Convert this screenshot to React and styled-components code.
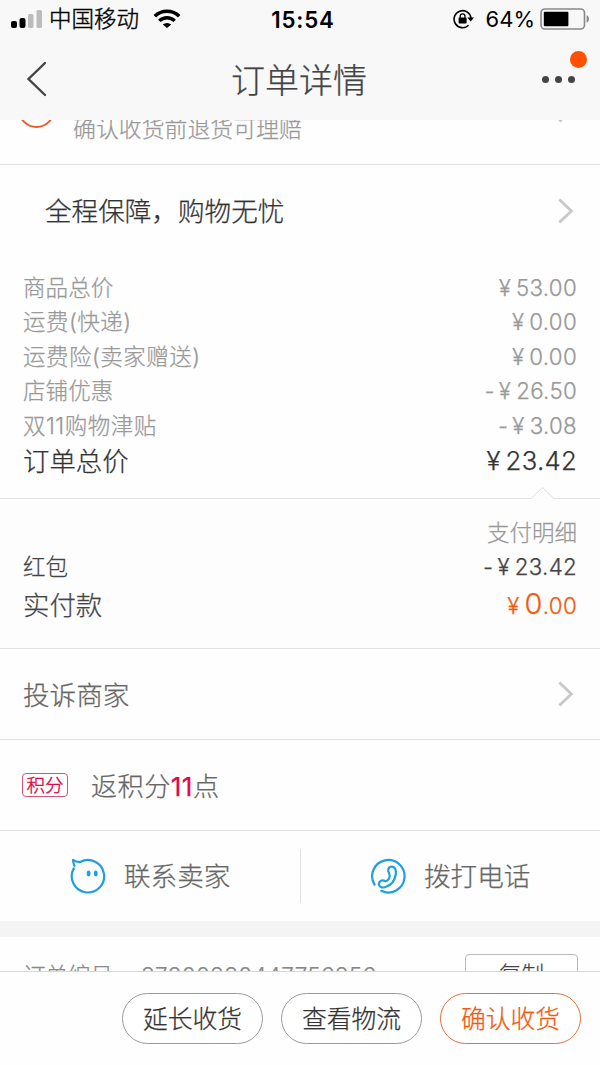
import React from "react";
import styled, { createGlobalStyle, css } from "styled-components";

const GlobalStyle = createGlobalStyle`
    * {
        box-sizing: border-box;
    }

    body {
        margin: 0;
        background: white;
        font-family: Inter, "Noto Sans CJK SC", sans-serif;
        font-weight: 300;
        -webkit-text-stroke: 0.25px;
        color: #333;
    }
`;

const Screen = styled.div`
    display: flex;
    flex-direction: column;
    width: 600px;
    height: 1065px;
    background: #fefefe;
    overflow: hidden;
    white-space: nowrap;
`;

const Header = styled.header`
    flex: none;
    height: 120px;
    background: #f8f8f8;
`;

const StatusBar = styled.div`
    display: grid;
    grid-template-columns: 1fr auto 1fr;
    align-items: center;
    height: 38px;
    padding: 0 11px;
    color: #000;
`;

const StatusGroup = styled.div`
    display: flex;
    align-items: center;
    justify-content: ${(props) => (props.$end ? "flex-end" : "flex-start")};
`;

const Carrier = styled.span`
    margin: 0 14px 0 6px;
    font-size: 22.5px;
    line-height: 38px;
    -webkit-text-stroke: 0.4px;
`;

const Clock = styled.span`
    margin-left: 6px;
    font-size: 22.3px;
    font-weight: 600;
    letter-spacing: 0.8px;
    -webkit-text-stroke: 0;
`;

const Percent = styled.span`
    margin: 0 5px 0 12px;
    font-size: 22px;
    font-weight: 400;
    -webkit-text-stroke: 0;
`;

const NavBar = styled.div`
    display: grid;
    grid-template-columns: 1fr auto 1fr;
    align-items: center;
    height: 82px;
    padding: 0 24px 0 26px;
`;

const Title = styled.h1`
    margin: 0 4px 0 0;
    padding-top: 3px;
    color: #444;
    font-size: 34px;
    font-weight: 300;
    line-height: 79px;
`;

const More = styled.div`
    position: relative;
    display: flex;
    justify-self: end;
    gap: 6px;
    margin-right: 1px;
`;

const MoreDot = styled.span`
    width: 7px;
    height: 7px;
    border-radius: 50%;
    background: #444;
`;

const Badge = styled.span`
    position: absolute;
    top: -25px;
    right: -12px;
    width: 17px;
    height: 17px;
    border-radius: 50%;
    background: #ff5000;
`;

const Content = styled.main`
    flex: none;
    height: 851px;
    overflow: hidden;
`;

const Guarantee = styled.div`
    display: flex;
    align-items: flex-end;
    height: 80px;
    margin-top: -35px;
    padding: 0 26px 18px 18px;
    border-bottom: 1px solid #e2e2e2;
`;

const GuaranteeIcon = styled.span`
    flex: none;
    width: 37px;
    height: 37px;
    margin-bottom: 18px;
    border: 2px solid #ee5a2a;
    border-radius: 50%;
`;

const GuaranteeText = styled.span`
    flex: 1;
    margin-left: 18px;
    color: #999;
    font-size: 22.9px;
    line-height: 34px;
`;

const GuaranteeArrow = styled.span`
    display: flex;
    margin-bottom: 22px;
`;

const LinkRow = styled.div`
    display: flex;
    align-items: center;
    justify-content: space-between;
    height: ${(props) => props.$height}px;
    padding: 0 26px 0 ${(props) => props.$indent}px;
    color: ${(props) => props.$color};
    font-size: 26.6px;
    ${(props) =>
        props.$line &&
        css`
            border-bottom: 1px solid #e2e2e2;
        `}
`;

const Label = styled.span`
    margin-top: ${(props) => (props.$low ? -1 : -3)}px;
`;

const Prices = styled.section`
    height: 242px;
    padding: 15px 23px 0;
`;

const PriceRow = styled.div`
    display: flex;
    justify-content: space-between;
    height: ${(props) => props.$height || 34.4}px;
    line-height: ${(props) => props.$height || 34.4}px;
    color: ${(props) => props.$color || "#999"};
    font-size: ${(props) => props.$size || 22.5}px;
`;

const PriceName = styled.span`
    letter-spacing: ${(props) => (props.$wide ? 0.5 : 0.1)}px;
`;

const Amount = styled.span`
    display: flex;
    letter-spacing: 0.3px;
    font-size: ${(props) => props.$size || 22.3}px;
`;

const PaidAmount = styled(Amount)`
    align-items: baseline;
    margin-top: -2px;
    color: #f25a10;
`;

const Yen = styled.span`
    margin: 0 5px 0 4px;
`;

const Big = styled.span`
    font-size: 29px;
`;

const Payment = styled.section`
    position: relative;
    height: 151px;
    padding: 17px 23px 0;
    border-top: 1px solid #e2e2e2;
    border-bottom: 1px solid #e2e2e2;
    background: #fdfdfd;
`;

const Notch = styled.svg`
    position: absolute;
    top: -13px;
    left: 530px;
`;

const Points = styled.div`
    display: flex;
    align-items: center;
    height: 91px;
    padding: 0 22px;
    border-bottom: 1px solid #e2e2e2;
    color: #666;
    font-size: 26.2px;
    letter-spacing: 0.4px;
`;

const Tag = styled.span`
    width: 46px;
    height: 24px;
    margin-right: 23px;
    border: 1px solid #d2557a;
    border-radius: 4px;
    color: #dd0a46;
    font-size: 18.5px;
    letter-spacing: 0;
    line-height: 22px;
    text-align: center;
    -webkit-text-stroke: 0.4px;
`;

const Red = styled.span`
    color: #dd0a46;
    font-weight: 400;
`;

const Contacts = styled.div`
    display: flex;
    align-items: center;
    height: 90px;
`;

const Contact = styled.div`
    display: flex;
    flex: 1;
    align-items: center;
    height: 54px;
    padding-left: 70px;
    gap: 17px;
    color: #666;
    font-size: 26.6px;

    & + & {
        border-left: 1px solid #e2e2e2;
        padding-left: 69px;
    }
`;

const Gap = styled.div`
    height: 16px;
    background: #f4f4f4;
`;

const OrderRow = styled.div`
    display: flex;
    align-items: flex-start;
    padding: 17px 22px 0 23px;
    color: #888;
    font-size: 22.5px;
    line-height: 43px;
`;

const OrderNumber = styled.span`
    flex: 1;
    margin-left: 28px;
    letter-spacing: 0.3px;
`;

const CopyButton = styled.button`
    width: 113px;
    height: 40px;
    padding: 0;
    border: 1px solid #bbb;
    border-radius: 4px;
    background: white;
    color: #444;
    font: inherit;
    line-height: 37px;
`;

const Footer = styled.footer`
    display: flex;
    flex: 1;
    justify-content: flex-end;
    gap: 18px;
    padding: 21px 19px 0;
    border-top: 1px solid #d8d8d8;
    background: #fefefe;
`;

const PillButton = styled.button`
    width: 141px;
    height: 51px;
    padding: 0;
    border: 1px solid ${(props) => (props.$primary ? "#e0713c" : "#999")};
    border-radius: 26px;
    background: white;
    color: ${(props) => (props.$primary ? "#f25a10" : "#333")};
    font: inherit;
    font-size: 24.8px;
    line-height: 48px;
`;

const prices = [
    { label: "商品总价", value: "53.00" },
    { label: "运费(快递)", value: "0.00", wide: true },
    { label: "运费险(卖家赠送)", value: "0.00", wide: true },
    { label: "店铺优惠", value: "26.50", minus: true },
    { label: "双11购物津贴", value: "3.08", minus: true, wide: true },
];

function SignalIcon() {
    return (
        <svg width="32" height="20" viewBox="0 0 32 20">
            <rect x="0" y="12" width="6" height="7" rx="2" fill="#000" />
            <rect x="8.5" y="9" width="6" height="10" rx="2" fill="#000" />
            <rect x="17" y="5" width="5.5" height="14" rx="1.5" fill="#bcbcbc" />
            <rect x="25.5" y="1" width="5.5" height="18" rx="1.5" fill="#bcbcbc" />
        </svg>
    );
}

function WifiIcon() {
    return (
        <svg width="28" height="20" viewBox="0 0 28 20">
            <path d="M1.8 7.2a17.4 17.4 0 0 1 24.4 0" fill="none" stroke="#000" strokeWidth="3.6" />
            <path d="M6.3 11.9a11 11 0 0 1 15.4 0" fill="none" stroke="#000" strokeWidth="3.4" />
            <path d="M9.8 15.6a6.2 6.2 0 0 1 8.4 0L14 19z" fill="#000" />
        </svg>
    );
}

function LockIcon() {
    return (
        <svg width="21" height="20" viewBox="0 0 21 20">
            <path d="M15.6 16.2A8.5 8.5 0 1 1 18 9" fill="none" stroke="#000" strokeWidth="1.6" />
            <path d="M14.3 8.5h6.7l-3.3 4z" fill="#000" />
            <rect x="5.6" y="8.6" width="8" height="6" rx="0.8" fill="#000" />
            <path d="M7.2 9V7.2a2.4 2.4 0 0 1 4.8 0V9" fill="none" stroke="#000" strokeWidth="1.3" />
        </svg>
    );
}

function BatteryIcon() {
    return (
        <svg width="49" height="22" viewBox="0 0 49 22">
            <rect x="1" y="1" width="43.5" height="20" rx="4" fill="none" stroke="#888" strokeWidth="1.6" />
            <rect x="3.8" y="3.8" width="24.6" height="14.4" rx="1" fill="#000" />
            <path d="M46.6 7.2c3.2 1.2 3.2 6.4 0 7.6z" fill="#888" />
        </svg>
    );
}

function BackIcon() {
    return (
        <svg width="22" height="36" viewBox="0 0 22 36">
            <path d="M19 2 2.5 18 19 34" fill="none" stroke="#444" strokeWidth="2.4" strokeLinecap="round" />
        </svg>
    );
}

function ArrowIcon() {
    return (
        <svg width="17" height="28" viewBox="0 0 17 28">
            <path d="M2.3 2.4 14.4 14 2.3 25.6" fill="none" stroke="#c8c8c8" strokeWidth="2.8" />
        </svg>
    );
}

function ChatIcon() {
    return (
        <svg width="37" height="37" viewBox="0 0 37 37" fill="none" stroke="#1e9fe0" strokeWidth="2.2">
            <path
                d="M3.8 10.4A16.2 16.2 0 1 0 10.3 4C7.8 4.3 5.4 3.4 3 1.8c.2 2.2.7 4.2 1.4 6"
                strokeLinecap="round"
                strokeLinejoin="round"
            />
            <ellipse cx="18.6" cy="15.4" rx="1.9" ry="2.9" fill="#1e9fe0" stroke="none" />
            <ellipse cx="25.8" cy="15.4" rx="1.9" ry="2.9" fill="#1e9fe0" stroke="none" />
        </svg>
    );
}

function PhoneIcon() {
    return (
        <svg
            width="37"
            height="37"
            viewBox="0 0 37 37"
            fill="none"
            stroke="#1e9fe0"
            strokeWidth="2.2"
            strokeLinecap="round"
            strokeLinejoin="round"
        >
            <path d="M4.5 26.6A16.2 16.2 0 1 1 11.3 32.8" />
            <path d="M19.2 15.4C17 12 18.5 8.7 21.8 8.7c3.3 0 4.5 3.3 4 7.3-.8 6.3-4.6 11.5-10.8 13.2-3 .8-6.2-.2-6.2-3.2 0-3.2 3.6-4.8 6.2-2.8 3 .3 6-4.2 4.2-7.8z" />
        </svg>
    );
}

function Price({ value, minus, size }) {
    return (
        <Amount $size={size}>
            {minus ? "-" : null}
            <Yen>¥</Yen>
            {value}
        </Amount>
    );
}

function App() {
    return (
        <Screen>
            <GlobalStyle />
            <Header>
                <StatusBar>
                    <StatusGroup>
                        <SignalIcon />
                        <Carrier>中国移动</Carrier>
                        <WifiIcon />
                    </StatusGroup>
                    <Clock>15:54</Clock>
                    <StatusGroup $end>
                        <LockIcon />
                        <Percent>64%</Percent>
                        <BatteryIcon />
                    </StatusGroup>
                </StatusBar>
                <NavBar>
                    <BackIcon />
                    <Title>订单详情</Title>
                    <More>
                        <MoreDot />
                        <MoreDot />
                        <MoreDot />
                        <Badge />
                    </More>
                </NavBar>
            </Header>

            <Content>
                <Guarantee>
                    <GuaranteeIcon />
                    <GuaranteeText>确认收货前退货可理赔</GuaranteeText>
                    <GuaranteeArrow>
                        <ArrowIcon />
                    </GuaranteeArrow>
                </Guarantee>
                <LinkRow $height={91} $indent={45} $color="#333">
                    <Label>全程保障，购物无忧</Label>
                    <ArrowIcon />
                </LinkRow>

                <Prices>
                    {prices.map((item) => (
                        <PriceRow key={item.label}>
                            <PriceName $wide={item.wide}>{item.label}</PriceName>
                            <Price value={item.value} minus={item.minus} />
                        </PriceRow>
                    ))}
                    <PriceRow $size={26.4} $height={36} $color="#333">
                        <span>订单总价</span>
                        <Price value="23.42" size={25.7} />
                    </PriceRow>
                </Prices>

                <Payment>
                    <Notch width="25" height="14" viewBox="0 0 25 14">
                        <path d="M1 12.5 12.5 1.5 24 12.5V14H1z" fill="#fdfdfd" />
                        <path d="M0 12.5h1L12.5 1.5 24 12.5h1" fill="none" stroke="#ddd" />
                    </Notch>
                    <PriceRow>
                        <span />
                        <span>支付明细</span>
                    </PriceRow>
                    <PriceRow $color="#444">
                        <span>红包</span>
                        <Price value="23.42" minus />
                    </PriceRow>
                    <PriceRow $size={26.4} $height={41} $color="#444">
                        <span>实付款</span>
                        <PaidAmount>
                            <Yen>¥</Yen>
                            <Big>0</Big>.00
                        </PaidAmount>
                    </PriceRow>
                </Payment>

                <LinkRow $height={91} $indent={23} $color="#666" $line>
                    <Label $low>投诉商家</Label>
                    <ArrowIcon />
                </LinkRow>
                <Points>
                    <Tag>积分</Tag>
                    <Label $low>
                        返积分<Red>11</Red>点
                    </Label>
                </Points>
                <Contacts>
                    <Contact>
                        <ChatIcon />
                        <Label>联系卖家</Label>
                    </Contact>
                    <Contact>
                        <PhoneIcon />
                        <Label>拨打电话</Label>
                    </Contact>
                </Contacts>
                <Gap />
                <OrderRow>
                    订单编号
                    <OrderNumber>87800880447756856</OrderNumber>
                    <CopyButton>复制</CopyButton>
                </OrderRow>
            </Content>

            <Footer>
                <PillButton>延长收货</PillButton>
                <PillButton>查看物流</PillButton>
                <PillButton $primary>确认收货</PillButton>
            </Footer>
        </Screen>
    );
}

export default App;
